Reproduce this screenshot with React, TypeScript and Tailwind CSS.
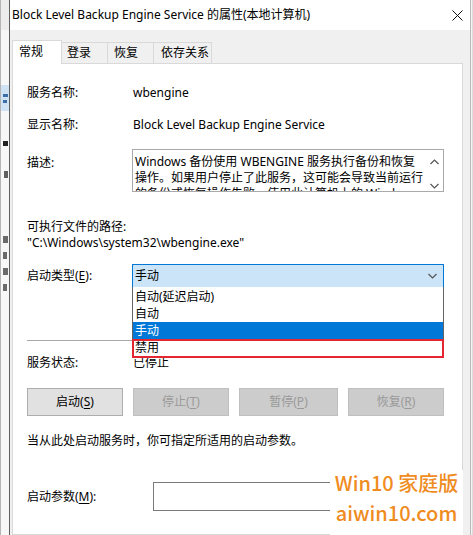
import React from 'react';

const font = "font-['Noto_Sans','Noto_Sans_CJK_SC',sans-serif]";

const Key = ({ k }: { k: string }) => <span className="underline underline-offset-[2px]">{k}</span>;

const Chevron = ({ up = false }: { up?: boolean }) => (
    <svg width="9" height="6" viewBox="0 0 9 6" className="block">
        <path d={up ? 'M0.5 5 L4.5 1 L8.5 5' : 'M0.5 1 L4.5 5 L8.5 1'} fill="none" stroke="#555" strokeWidth="1.2" />
    </svg>
);

// Bit of the window behind the dialog, cut off at the left edge
const BackdropStrip = () => (
    <div className="w-[9px] h-full flex flex-col bg-[#f7f7f7] border-l border-[#b5b5b5]">
        <div className="h-[30px] bg-[#ececec]" />
        <div className="h-[55px]" />
        <div className="h-[26px] bg-[#cfe3f5] flex flex-col justify-center gap-[3px] pl-[2px]">
            <div className="h-[3px] w-[5px] bg-[#3d6ea8]" />
            <div className="h-[3px] w-[4px] bg-[#3d6ea8]" />
        </div>
        <div className="h-[30px]" />
        <div className="h-[5px] w-[5px] ml-[2px] bg-[#202020]" />
        <div className="h-[25px]" />
        <div className="h-[7px] w-[4px] ml-[3px] bg-[#606060]" />
        <div className="h-[58px]" />
        <div className="flex flex-col gap-[9px] pl-[2px]">
            <div className="h-[7px] w-[5px] bg-[#6a6a6a]" />
            <div className="h-[7px] w-[4px] bg-[#6a6a6a]" />
            <div className="h-[7px] w-[5px] bg-[#6a6a6a]" />
            <div className="h-[7px] w-[4px] bg-[#6a6a6a]" />
        </div>
    </div>
);

const tabs = [
    { label: '登录', w: 'w-[47px] pl-[5px]' },
    { label: '恢复', w: 'w-[47px] pl-[6px]' },
    { label: '依存关系', w: 'w-[59px] pl-[7px]' },
];

export default function App() {
    return (
        <div className={`relative w-[473px] h-[535px] overflow-hidden flex bg-[#dcdcdc] text-[12px] text-black ${font}`}>
            <BackdropStrip />

            <div className="w-[462px] h-full flex flex-col border-l border-r border-l-[#5f5f5f] border-r-[#b9b9b9]">
                {/* Title bar */}
                <div className="h-[30px] bg-white flex items-center justify-between pl-[2px] pr-[7px]">
                    <span className="leading-[16px] text-[12px]">Block Level Backup Engine Service 的属性(本地计算机)</span>
                    <svg width="11" height="11" viewBox="0 0 11 11">
                        <path d="M0.5 0.5 L10.5 10.5 M10.5 0.5 L0.5 10.5" stroke="#111" strokeWidth="1" />
                    </svg>
                </div>

                <div className="flex-1 flex flex-col bg-[#f0f0f0] pt-[10px] pl-[2px] pr-[7px]">
                    {/* Tabs */}
                    <div className="flex items-end h-[23px]">
                        <div className="relative z-10 -mb-px h-[24px] w-[50px] pl-[6px] pb-[2px] flex items-center bg-white border border-b-0 border-[#d9d9d9]">
                            常规
                        </div>
                        {tabs.map((t) => (
                            <div
                                key={t.label}
                                className={`-ml-px h-[21px] ${t.w} flex items-center border border-b-0 border-[#d9d9d9] bg-[#f0f0f0]`}
                            >
                                {t.label}
                            </div>
                        ))}
                    </div>

                    {/* Panel */}
                    <div className="flex-1 flex flex-col bg-white border border-[#d9d9d9] pl-[14px] pr-[18px] pt-[21px] leading-[16px]">
                        <div className="flex h-[16px] items-center">
                            <span className="w-[106px]">服务名称:</span>
                            <span>wbengine</span>
                        </div>
                        <div className="flex h-[16px] items-center mt-[16px]">
                            <span className="w-[106px]">显示名称:</span>
                            <span>Block Level Backup Engine Service</span>
                        </div>

                        <div className="flex h-[43px] mt-[16px]">
                            <span className="w-[105px] pt-[6px]">描述:</span>
                            <div className="flex-1 flex border border-[#a9a9a9] overflow-hidden">
                                <div className="flex-1 pt-[4px] pl-[2px] whitespace-nowrap overflow-hidden">
                                    <div>Windows 备份使用 WBENGINE 服务执行备份和恢复</div>
                                    <div>操作。如果用户停止了此服务，这可能会导致当前运行</div>
                                    <div>的备份或恢复操作失败。使用此计算机上的 Windows</div>
                                </div>
                                <div className="w-[18px] flex flex-col items-center pt-[9px] gap-[18px]">
                                    <Chevron up />
                                    <Chevron />
                                </div>
                            </div>
                        </div>

                        <div className="mt-[27px] h-[15px] leading-[15px]">可执行文件的路径:</div>
                        <div className="mt-px h-[15px] leading-[15px]">"C:\Windows\system32\wbengine.exe"</div>

                        {/* Startup type with open list */}
                        <div className="flex h-[24px] items-center mt-[14px]">
                            <span className="w-[105px]">
                                启动类型(<Key k="E" />):
                            </span>
                            <div className="relative z-20 flex-1 h-full flex items-center justify-between pl-[2px] pr-[6px] bg-[#cce4f7] border border-[#0078d7]">
                                <span>手动</span>
                                <Chevron />
                                <div className="absolute top-full -left-px -right-px flex flex-col pt-px bg-white border border-t-0 border-[#646464]">
                                    <div className="h-[17px] flex items-center pl-[2px]">自动(延迟启动)</div>
                                    <div className="h-[17px] flex items-center pl-[2px]">自动</div>
                                    <div className="h-[17px] flex items-center pl-[2px] bg-[#0078d7] text-white">手动</div>
                                    <div className="relative h-[17px] flex items-center pl-[2px]">
                                        禁用
                                        <div className="absolute -left-px -right-px top-0 -bottom-[2px] border-2 border-[#e3262f]" />
                                    </div>
                                </div>
                            </div>
                        </div>

                        <div className="h-px bg-[#a8a8a8] mt-[52px]" />

                        <div className="flex h-[16px] items-center mt-[14px]">
                            <span className="w-[106px]">服务状态:</span>
                            <span>已停止</span>
                        </div>

                        <div className="flex justify-between h-[28px] mt-[17px]">
                            <div className="w-[96px] flex items-center justify-center bg-[#e1e1e1] border border-[#adadad]">
                                启动(<Key k="S" />)
                            </div>
                            <div className="w-[96px] flex items-center justify-center bg-[#cccccc] border border-[#bfbfbf] text-[#9a9a9a]">
                                停止(<Key k="T" />)
                            </div>
                            <div className="w-[99px] flex items-center justify-center bg-[#cccccc] border border-[#bfbfbf] text-[#9a9a9a]">
                                暂停(<Key k="P" />)
                            </div>
                            <div className="w-[96px] flex items-center justify-center bg-[#cccccc] border border-[#bfbfbf] text-[#9a9a9a]">
                                恢复(<Key k="R" />)
                            </div>
                        </div>

                        <div className="h-[16px] mt-[17px]">当从此处启动服务时，你可指定所适用的启动参数。</div>

                        <div className="flex h-[29px] items-center mt-[33px]">
                            <span className="w-[126px]">
                                启动参数(<Key k="M" />):
                            </span>
                            <div className="flex-1 h-full border border-[#7a7a7a]" />
                        </div>
                    </div>
                </div>
            </div>

            <div className="w-[1px] h-full bg-[#f4f4f4]" />

            {/* Site watermark pasted over the corner */}
            <div className="absolute left-[330px] top-[470px] w-[133px] h-[65px] bg-white flex flex-col items-center gap-[4px] text-[20px] leading-[26px] font-medium text-[#ef8c1f] font-['Noto_Sans_CJK_SC',sans-serif]">
                <span>Win10 家庭版</span>
                <span>aiwin10.com</span>
            </div>
        </div>
    );
}
